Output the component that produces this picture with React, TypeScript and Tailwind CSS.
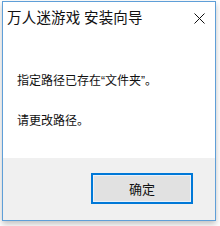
export default function App() {
  const font = { fontFamily: '"Noto Sans CJK SC", "Noto Sans", sans-serif' };
  const q = { fontFamily: '"Liberation Sans", sans-serif' };
  return (
    <div className="w-[220px] h-[226px] bg-white relative" style={font}>
      <div className="absolute left-[2px] top-[1px] w-[214px] h-[220px] border border-[#5f9fd8] shadow-[0_3px_6px_rgba(0,0,0,0.25)] flex flex-col bg-white">
        <div className="h-[30px] flex items-center justify-between pl-[4px] pr-[10px] shrink-0">
          <span className="text-[14.5px] leading-none text-[#111] tracking-[0.2px]">万人迷游戏 安装向导</span>
          <svg width="11" height="11" viewBox="0 0 11 11" className="mt-[2px]">
            <path d="M0.5 0.5 L10.5 10.5 M10.5 0.5 L0.5 10.5" stroke="#111" strokeWidth="1" fill="none" />
          </svg>
        </div>
        <div className="flex-1 bg-white pl-[14px] pt-[40px]">
          <div className="text-[12px] leading-[16px] text-[#111]">
            指定路径已存在<span style={q}>“</span>文件夹<span style={q}>”</span>。
          </div>
          <div className="text-[12px] leading-[16px] text-[#111] mt-[23px]">请更改路径。</div>
        </div>
        <div className="h-[62px] bg-[#f0f0f0] flex justify-end items-start pt-[15px] pr-[22px] shrink-0">
          <div className="w-[102px] h-[31px] border-2 border-[#0078d7] bg-[#e1e1e1] flex items-center justify-center">
            <div className="w-full h-full border border-[#e8f1fb] flex items-center justify-center">
              <span className="text-[13px] leading-none text-[#111]">确定</span>
            </div>
          </div>
        </div>
      </div>
    </div>
  );
}
